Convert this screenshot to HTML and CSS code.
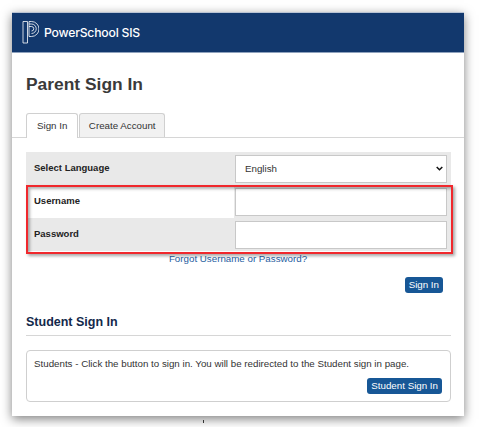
FILE: index.html
```html
<!DOCTYPE html>
<html lang="en">
<head>
<meta charset="utf-8">
<title>PowerSchool SIS</title>
<link rel="stylesheet" href="styles.css">
</head>
<body>
<main class="card">
  <header class="banner">
    <svg class="logo" width="17" height="25" viewBox="0 0 17 25" fill="none" stroke="#fff" stroke-width="0.8">
      <path d="M1 1.5h4.5v21.5h-4.500z"/>
      <path d="M7 1.500h2.500a7 7 0 0 1 0 15H7z"/>
      <path d="M7 4h2.500a4.500 4.500 0 0 1 0 9.500"/>
      <path d="M7 6.500h2.500a2.200 2.200 0 0 1 0 4.500"/>
    </svg>
    <span class="brand">PowerSchool SIS</span>
  </header>
  <h1 class="title">Parent Sign In</h1>
  <nav class="tabs">
    <a class="tab tab-active">Sign In</a>
    <a class="tab">Create Account</a>
  </nav>
  <section class="form-wrap">
    <div class="row row-grey">
      <label class="label">Select Language</label>
      <div class="field field-select">
        <select class="control select"><option>English</option></select>
        <svg class="chevron" width="7" height="5" viewBox="0 0 7 5" fill="none" stroke="#111" stroke-width="1.500"><path d="M.7 1l2.800 2.800L6.300 1"/></svg>
      </div>
    </div>
    <div class="row">
      <label class="label">Username</label>
      <div class="field"><input class="control" type="text"></div>
    </div>
    <div class="row row-grey">
      <label class="label">Password</label>
      <div class="field"><input class="control" type="password"></div>
    </div>
    <div class="highlight"></div>
  </section>
  <a class="forgot">Forgot Username or Password?</a>
  <div class="actions"><button class="btn">Sign In</button></div>
  <h2 class="subtitle">Student Sign In</h2>
  <section class="student">
    <p class="student-text">Students - Click the button to sign in. You will be redirected to the Student sign in page.</p>
    <div class="student-actions"><button class="btn">Student Sign In</button></div>
  </section>
</main>
<span class="speck"></span>
</body>
</html>
```
FILE: styles.css
```css
* { box-sizing: border-box; }
html, body { margin: 0; height: 427px; overflow: hidden; background: #fff; }
body { font-family: "Liberation Sans", Arial, sans-serif; color: #333; padding: 12px 16px 0 12px; position: relative; }
.card { width: 452px; height: 404px; background: #fff; box-shadow: 0 3px 10px rgba(0,0,0,.5); display: flex; flex-direction: column; }
.banner { height: 41px; background: #12386d; display: flex; align-items: center; padding: 0 10px; gap: 5px; border-top: 1px solid #b9c4d4; border-bottom: 1px solid #8fa2bd; color: #fff; }
.logo { flex: none; }
.brand { font-family: Inter, "Liberation Sans", sans-serif; font-size: 12.2px; font-weight: 500; letter-spacing: -.2px; }
.title { margin: 21px 0 0 14px; font-size: 17.4px; line-height: 21px; font-weight: 700; color: #3a3a3a; height: 21px; }
.tabs { margin-top: 18px; height: 25px; padding-left: 14px; display: flex; gap: 1px; border-bottom: 1px solid #d6d6d6; }
.tab { height: 24px; padding: 0 8.5px; font-size: 9.75px; line-height: 24px; color: #333; background: #f1f1f1; border: 1px solid #d0d0d0; border-bottom: 0; border-radius: 3px 3px 0 0; }
.tab-active { background: #fff; height: 25px; padding: 0 10px; }
.form-wrap { position: relative; margin: 14px 13px 0 14px; }
.row { display: flex; height: 33px; }
.row-grey { background: #e9e9e9; }
.label { width: 208px; padding-left: 8px; font-size: 9.5px; font-weight: 700; line-height: 32px; color: #222; }
.field { flex: 1; background: #e9e9e9; padding: 3px 4px 2px 1px; }
.field-select { position: relative; }
.control { display: block; width: 100%; height: 28px; border: 1px solid #c8c8c8; background: #fff; border-radius: 0; font: 9.75px "Liberation Sans", Arial, sans-serif; color: #333; padding: 0 5px; }
.select { appearance: none; -webkit-appearance: none; padding: 0 9px 1px; }
.chevron { position: absolute; right: 8px; top: 14px; }
.highlight { position: absolute; left: 0; top: 33px; width: 427px; height: 69px; border: 2px solid #f0282d; box-shadow: 2px 2px 3px rgba(0,0,0,.35), inset 2px 2px 3px rgba(0,0,0,.3); pointer-events: none; }
.forgot { margin-top: 2px; height: 12px; padding-left: 14px; width: 438px; text-align: center; font-size: 9.75px; line-height: 12px; color: #28609f; }
.actions { display: flex; justify-content: flex-end; padding-right: 21px; margin-top: 12px; }
.btn { border: 0; border-radius: 3px; background: #175796; color: #fff; font: 9.75px/16px "Liberation Sans", Arial, sans-serif; height: 16px; padding: 0 4px; }
.subtitle { margin: 21px 0 0 14px; width: 425px; height: 22px; font-size: 12.5px; line-height: 16px; font-weight: 700; color: #13294b; border-bottom: 1px solid #d6d6d6; }
.student { margin: 14px 0 0 14px; width: 425px; height: 52px; border: 1px solid #cfcfcf; border-radius: 4px; padding: 6px 8px 0 7px; }
.student-text { margin: 0; font-size: 9.75px; line-height: 13px; color: #333; }
.student-actions { display: flex; justify-content: flex-end; margin-top: 8px; }
.speck { position: absolute; left: 203px; top: 420px; width: 1px; height: 3px; background: #333; }
```
